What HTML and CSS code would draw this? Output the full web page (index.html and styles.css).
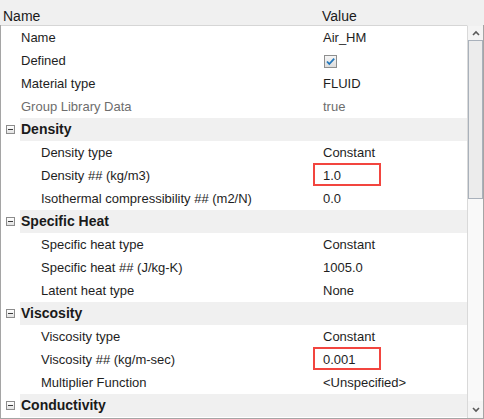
FILE: index.html
```html
<!DOCTYPE html>
<html>
<head>
<meta charset="utf-8">
<link rel="stylesheet" href="styles.css">
</head>
<body>
<div class="table">
  <div class="header">
    <div class="hcell">Name</div>
    <div class="hcell">Value</div>
  </div>
  <div class="main">
    <div class="rows">
      <div class="row"><div class="name top">Name</div><div class="val">Air_HM</div></div>
      <div class="row"><div class="name top">Defined</div><div class="val"><span class="check"><svg width="11" height="11" viewBox="0 0 11 11"><path d="M2 5.5 L4.3 8 L9.2 2.6" fill="none" stroke="#2277bb" stroke-width="1.8"/></svg></span></div></div>
      <div class="row"><div class="name top">Material type</div><div class="val">FLUID</div></div>
      <div class="row muted"><div class="name top">Group Library Data</div><div class="val">true</div></div>
      <div class="row group"><div class="toggle"><span class="minus"></span></div><div class="glabel">Density</div></div>
      <div class="row"><div class="name child">Density type</div><div class="val">Constant</div></div>
      <div class="row"><div class="name child">Density ## (kg/m3)</div><div class="val hl">1.0</div></div>
      <div class="row"><div class="name child">Isothermal compressibility ## (m2/N)</div><div class="val">0.0</div></div>
      <div class="row group"><div class="toggle"><span class="minus"></span></div><div class="glabel">Specific Heat</div></div>
      <div class="row"><div class="name child">Specific heat type</div><div class="val">Constant</div></div>
      <div class="row"><div class="name child">Specific heat ## (J/kg-K)</div><div class="val">1005.0</div></div>
      <div class="row"><div class="name child">Latent heat type</div><div class="val">None</div></div>
      <div class="row group"><div class="toggle"><span class="minus"></span></div><div class="glabel">Viscosity</div></div>
      <div class="row"><div class="name child">Viscosity type</div><div class="val">Constant</div></div>
      <div class="row"><div class="name child">Viscosity ## (kg/m-sec)</div><div class="val hl">0.001</div></div>
      <div class="row"><div class="name child">Multiplier Function</div><div class="val">&lt;Unspecified&gt;</div></div>
      <div class="row group"><div class="toggle"><span class="minus"></span></div><div class="glabel">Conductivity</div></div>
    </div>
    <div class="scrollbar">
      <div class="sbtn"><svg width="8" height="6" viewBox="0 0 8 6"><path d="M1 5 L4 2 L7 5" fill="none" stroke="#5a5a5a" stroke-width="1.6"/></svg></div>
      <div class="thumb"></div>
      <div class="track"></div>
      <div class="sbtn"><svg width="8" height="6" viewBox="0 0 8 6"><path d="M1 1 L4 4 L7 1" fill="none" stroke="#5a5a5a" stroke-width="1.6"/></svg></div>
    </div>
  </div>
</div>
</body>
</html>
```
FILE: styles.css
```css
html, body {
  margin: 0;
  padding: 0;
  background: #f0f0f0;
}
body {
  font-family: "Liberation Sans", Arial, sans-serif;
  font-size: 13px;
  color: #1e1e1e;
}
.table {
  width: 484px;
  height: 419px;
  display: flex;
  flex-direction: column;
}
.header {
  height: 25px;
  box-sizing: border-box;
  display: grid;
  grid-template-columns: 319px 1fr;
  background: #f0f0f0;
  font-size: 14px;
  line-height: 16px;
  padding-top: 8px;
}
.hcell {
  padding-left: 3px;
  color: #1a1a1a;
}
.main {
  display: flex;
  height: 393px;
  border-left: 1px solid #a5a5a5;
  border-right: 1px solid #a5a5a5;
  border-bottom: 1px solid #a5a5a5;
}
.rows {
  flex: 1;
  background: #ffffff;
  border-top: 1px solid #d6d6d6;
  display: flex;
  flex-direction: column;
}
.row {
  height: 23px;
  line-height: 23px;
  display: grid;
  grid-template-columns: 312px 1fr;
  white-space: nowrap;
}
.name.top {
  padding-left: 20px;
}
.name.child {
  padding-left: 40px;
}
.val {
  padding-left: 10px;
  position: relative;
}
.muted {
  color: #6d6d6d;
}
.hl::after {
  content: "";
  position: absolute;
  left: 0;
  top: -1px;
  width: 68px;
  height: 23px;
  box-sizing: border-box;
  border: 2px solid #f2453f;
}
.row.group {
  grid-template-columns: 19px 1fr;
}
.toggle {
  display: flex;
  align-items: center;
  padding-left: 5px;
}
.minus {
  width: 9px;
  height: 9px;
  box-sizing: border-box;
  border: 1px solid #8c8c8c;
  background: linear-gradient(#ffffff, #e2e2e2);
  position: relative;
}
.minus::after {
  content: "";
  position: absolute;
  left: 1px;
  top: 3px;
  width: 5px;
  height: 1px;
  background: #3c3c3c;
}
.glabel {
  background: #f0f0f0;
  font-weight: bold;
  font-size: 14px;
  padding-left: 1px;
  color: #1a1a1a;
}
.check {
  display: inline-flex;
  align-items: center;
  justify-content: center;
  width: 13px;
  height: 13px;
  box-sizing: border-box;
  border: 1px solid #8e8f8f;
  background: linear-gradient(#f6f6f6, #dcdcdc);
  vertical-align: -2px;
  margin-left: 1px;
}
.scrollbar {
  width: 15px;
  display: flex;
  flex-direction: column;
  background: #f4f4f4;
  border-left: 1px solid #d9d9d9;
  border-top: 1px solid #f0f0f0;
}
.sbtn {
  height: 14px;
  display: flex;
  align-items: center;
  justify-content: center;
  padding-left: 1px;
}
.sbtn:last-child {
  height: 17px;
}
.thumb {
  height: 159px;
  box-sizing: border-box;
  border: 1px solid #a9b1bb;
  background: #ececec;
  margin-left: 0;
}
.track {
  flex: 1;
  background: #f9f9f9;
}
```
